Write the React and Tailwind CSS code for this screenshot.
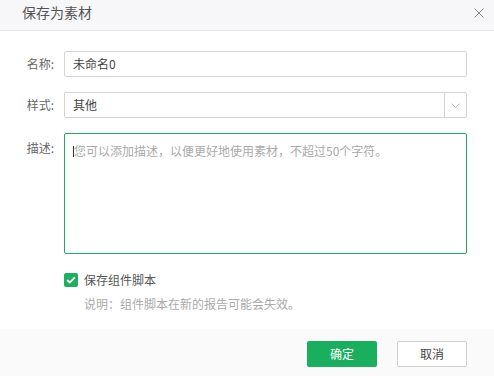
import React from "react";

const font = { fontFamily: '"Noto Sans CJK SC", "Noto Sans", sans-serif' };

export default function App() {
  return (
    <div className="w-[494px] h-[376px] bg-white flex flex-col text-[12px] text-[#444]" style={font}>
      <div className="h-[31px] shrink-0 bg-[#f7f7f9] border-b border-[#e7e7ec] flex items-start justify-between pl-[22px] pr-[10px]">
        <span className="mt-[4px] text-[14px] leading-[16px] text-[#555]">保存为素材</span>
        <svg className="mt-[8px]" width="10" height="10" viewBox="0 0 10 10">
          <path d="M0.5 0.5 L9.5 9.5 M9.5 0.5 L0.5 9.5" stroke="#8a8a8a" strokeWidth="1" fill="none" />
        </svg>
      </div>

      <div className="flex-1 flex flex-col pt-[20px] pr-[27px]">
        <div className="flex items-center h-[26px]">
          <div className="w-[64px] shrink-0 text-right pr-[10px] text-[#666] leading-[14px]">名称:</div>
          <div className="flex-1 h-[26px] border border-[#d4d4d4] rounded-[2px] flex items-center px-[8px] leading-[14px] text-[#444]">未命名0</div>
        </div>

        <div className="flex items-center h-[26px] mt-[15px]">
          <div className="w-[64px] shrink-0 text-right pr-[10px] text-[#666] leading-[14px]">样式:</div>
          <div className="flex-1 h-[26px] border border-[#d4d4d4] rounded-[2px] flex items-center">
            <span className="flex-1 px-[8px] leading-[14px] text-[#444]">其他</span>
            <div className="w-[22px] h-full border-l border-[#d4d4d4] flex items-center justify-center">
              <svg width="9" height="5" viewBox="0 0 9 5">
                <path d="M0.5 0.5 L4.5 4.5 L8.5 0.5" stroke="#bdbdbd" strokeWidth="1" fill="none" />
              </svg>
            </div>
          </div>
        </div>

        <div className="flex items-start mt-[15px]">
          <div className="w-[64px] shrink-0 text-right pr-[10px] text-[#666] leading-[14px] pt-[8px]">描述:</div>
          <div className="flex-1 h-[121px] border border-[#1dae5e] rounded-[2px] px-[8px] pt-[10px] flex items-start">
            <span className="w-px h-[11px] bg-[#333] mt-[2px]"></span>
            <span className="text-[#aaa] leading-[14px]">您可以添加描述，以便更好地使用素材，不超过50个字符。</span>
          </div>
        </div>

        <div className="flex items-center mt-[19px] pl-[64px]">
          <div className="w-[14px] h-[14px] rounded-[2px] bg-[#1dae5e] flex items-center justify-center">
            <svg width="10" height="8" viewBox="0 0 10 8">
              <path d="M1.2 4 L3.8 6.5 L8.8 1.3" stroke="#fff" strokeWidth="1.8" fill="none" />
            </svg>
          </div>
          <span className="ml-[6px] text-[#555] leading-[14px]">保存组件脚本</span>
        </div>

        <div className="pl-[84px] mt-[10px] text-[#aaa] leading-[14px]">说明：组件脚本在新的报告可能会失效。</div>
      </div>

      <div className="h-[47px] shrink-0 bg-[#fafafa] flex items-start justify-end gap-[20px] pr-[27px] pt-[12px]">
        <button className="w-[70px] h-[26px] rounded-[2px] bg-[#1aae5f] text-white text-[12px] leading-[14px]">确定</button>
        <button className="w-[70px] h-[26px] rounded-[2px] bg-white border border-[#cfcfcf] text-[#444] text-[12px] leading-[14px]">取消</button>
      </div>
    </div>
  );
}
